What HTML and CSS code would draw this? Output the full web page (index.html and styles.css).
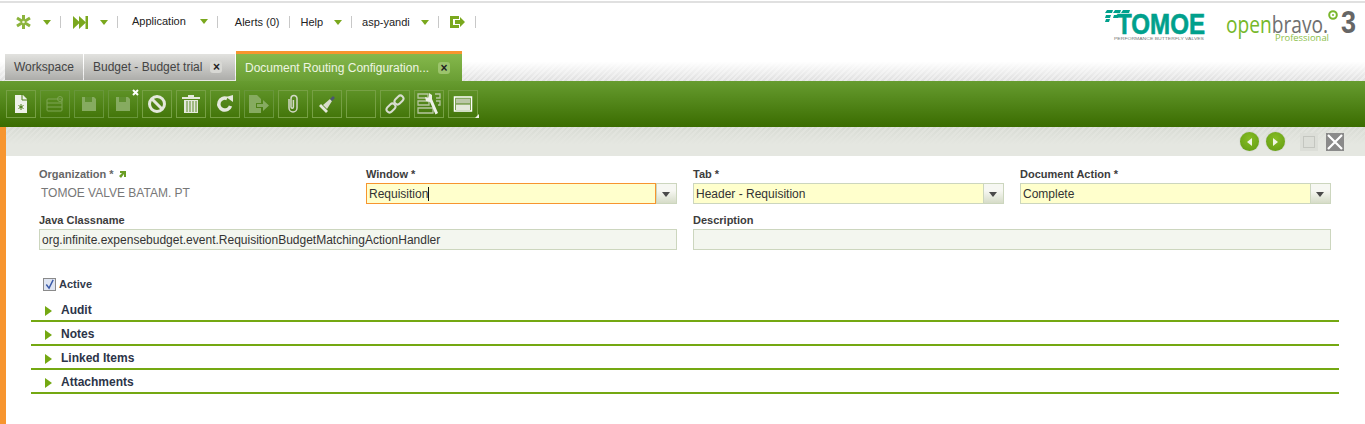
FILE: index.html
```html
<!DOCTYPE html>
<html lang="en">
<head>
<meta charset="utf-8">
<title>Document Routing Configuration</title>
<link rel="stylesheet" href="styles.css">
</head>
<body>
<header class="nav">
  <div class="nav-items">
    <svg class="ico star" viewBox="0 0 15 14"><g stroke="#8cb43c" stroke-width="3"><path d="M7.5 0v14M1 3l13 8M14 3L1 11"/></g><circle cx="7.5" cy="7" r="1.300" fill="#eef3dc"/></svg>
    <i class="caret c1"></i><i class="sep s1"></i>
    <svg class="ico ff" viewBox="0 0 15 13"><path d="M0 0l7 6.5L0 13zM6 0l7 6.5L6 13z" fill="#7aa81e"/><rect x="12.5" width="2.5" height="13" fill="#7aa81e"/></svg>
    <i class="caret c1"></i><i class="sep s1"></i>
    <span class="nav-text app">Application</span>
    <i class="caret c2"></i><i class="sep s1"></i>
    <span class="nav-text alerts">Alerts (0)</span>
    <i class="sep s2"></i>
    <span class="nav-text help">Help</span>
    <i class="caret c3"></i><i class="sep s1"></i>
    <span class="nav-text user">asp-yandi</span>
    <i class="caret c3"></i><i class="sep s1"></i>
    <svg class="ico logout" viewBox="0 0 15 12"><path d="M9 0H0v12h9V9H3V3h6z" fill="#7aa81e"/><path d="M5 4h5V1l5 5-5 5V8H5z" fill="#7aa81e"/></svg>
    <i class="sep s3"></i>
  </div>
  <div class="logos">
    <svg class="logo-tomoe" viewBox="0 0 101 32">
      <g fill="#00a08c"><path d="M2 1h6l-1 3H0zM10 1h6l-1 3H8zM18 1h7l-1 3h-8zM1 6h5L5 9H0zM9 6h5l-1 3H8z"/><path d="M1 10h4l-1 3H0z"/></g>
      <text class="tomoe-word" x="12" y="25" textLength="88" lengthAdjust="spacingAndGlyphs">TOMOE</text>
      <text class="tomoe-tag" x="9" y="31" textLength="90" lengthAdjust="spacingAndGlyphs">PERFORMANCE BUTTERFLY VALVES</text>
    </svg>
    <svg class="logo-ob" viewBox="0 0 132 34">
      <text class="ob-word" y="24" x="0" textLength="102" lengthAdjust="spacingAndGlyphs"><tspan class="ob-open">open</tspan><tspan class="ob-bravo">bravo.</tspan></text>
      <text class="ob-pro" x="49" y="32" textLength="54" lengthAdjust="spacingAndGlyphs">Professional</text>
      <circle cx="107" cy="6" r="3.800" fill="none" stroke="#7ab62c" stroke-width="2"/>
      <circle cx="107" cy="6" r="1" fill="#7ab62c"/>
      <text class="ob-three" x="115" y="24" textLength="15" lengthAdjust="spacingAndGlyphs">3</text>
    </svg>
  </div>
</header>

<nav class="tabs">
  <div class="tab tab-first">Workspace</div>
  <div class="tab tab-budget">Budget - Budget trial<i class="tab-x">×</i></div>
  <div class="tab tab-active">Document Routing Configuration...<i class="tab-x">×</i></div>
</nav>

<div class="toolbar">
  <button class="tool"><svg viewBox="0 0 20 20"><path d="M4 1h8l4 4v14H4z" fill="#eef1e8"/><path d="M11 0v6h5" fill="none" stroke="#4d7d16"/><path d="M10 10v6M7.500 11.500l5 3M12.500 11.500l-5 3" stroke="#4d7d16"/></svg></button>
  <button class="tool off"><svg viewBox="0 0 20 20"><g fill="none" stroke="#7ea555"><rect x="2" y="5" width="15" height="12" rx="1"/><path d="M2 9h15M2 13h15"/><circle cx="15" cy="5" r="2.500"/></g></svg></button>
  <button class="tool off"><svg viewBox="0 0 20 20"><path d="M3 3h12l2 2v12H3z" fill="#86ab60"/><rect x="6" y="3" width="7" height="5" fill="#5f9030"/></svg></button>
  <button class="tool off"><svg viewBox="0 0 20 20"><path d="M3 3h12l2 2v12H3z" fill="#86ab60"/><rect x="6" y="3" width="7" height="5" fill="#5f9030"/></svg><svg class="badge-x" viewBox="0 0 7 7"><path d="M1 1l5 5M6 1L1 6" stroke="#fff" stroke-width="2"/></svg></button>
  <button class="tool"><svg viewBox="0 0 20 20"><circle cx="10" cy="10" r="7.500" fill="none" stroke="#e4e8dc" stroke-width="3"/><path d="M5 5l10 10" stroke="#e4e8dc" stroke-width="3"/></svg></button>
  <button class="tool"><svg viewBox="0 0 20 20"><path d="M1 3h18v2H1zM7 1h6v2H7z" fill="#e4e8dc"/><path d="M3 6h14v13H3z" fill="#e4e8dc"/><path d="M6 7v11M9 7v11M12 7v11M15 7v11" stroke="#5c8a28"/></svg></button>
  <button class="tool"><svg viewBox="0 0 20 20"><path d="M15.500 12A6 6 0 1 1 12 4.500" fill="none" stroke="#e4e8dc" stroke-width="3.500"/><path d="M11 3l7-2 0 7z" fill="#e4e8dc"/></svg></button>
  <button class="tool off"><svg viewBox="0 0 20 20"><path d="M0 1h8l4 4v4H7v5h5v5H0z" fill="#86ab60"/><path d="M8 10h6V6l6 5.500-6 5.500v-4H8z" fill="#86ab60"/></svg></button>
  <button class="tool"><svg viewBox="0 0 20 20"><path d="M6 5v9a4 4 0 0 0 8 0V4.500a3 3 0 0 0-6 0V13a1.200 1.200 0 0 0 2.400 0V6" fill="none" stroke="#d4dac8" stroke-width="1.500"/></svg></button>
  <button class="tool"><svg viewBox="0 0 20 20"><path d="M2 12l2-2 7 7-2 2z" fill="#e4e8dc"/><path d="M6 11l7-6 2 2-5 8z" fill="#d8dccc"/><path d="M13 5l3-3 2 2-3 3z" fill="#4a5670"/></svg></button>
  <button class="tool"></button>
  <button class="tool"><svg viewBox="0 0 20 20"><g fill="none" stroke="#d8ddd0" stroke-width="2"><rect x="1" y="11" width="10" height="6" rx="3" transform="rotate(-45 6 14)"/><rect x="9" y="3" width="10" height="6" rx="3" transform="rotate(-45 14 6)"/></g></svg></button>
  <button class="tool"><svg class="tool-wide" viewBox="0 0 24 24"><g fill="none" stroke="#b6c6a0" stroke-width="1.300"><path d="M1 2h10v4H1zM1 9h11v4H1zM1 16h15v5H1zM18 2h5v4h-4M19 9h4v4h-2"/></g><path d="M12 1l3 2v4l6 14-2.500 1.500L13 10l-4-1-1-4 3 1 1-2z" fill="#eef0e8"/></svg></button>
  <button class="tool"><svg viewBox="0 0 20 20"><rect x="1.500" y="3" width="17" height="14" fill="none" stroke="#fff" stroke-width="1.500"/><rect x="3" y="4.500" width="14" height="5" fill="#bcc8a8"/><rect x="3" y="10.500" width="14" height="5.500" fill="#e4e8da"/></svg><i class="corner"></i></button>
</div>

<main class="content">
  <div class="statusbar">
    <span class="round"><i class="tri-l"></i></span>
    <span class="round"><i class="tri-r"></i></span>
    <span class="square"><i></i></span>
    <span class="close"><svg viewBox="0 0 18 18"><path d="M2 2l14 14M16 2L2 16" stroke="#fff" stroke-width="2.200"/></svg></span>
  </div>

  <form class="form">
    <div class="field">
      <span class="label label-muted">Organization * <svg class="link-arrow" viewBox="0 0 7 8"><path d="M1 1h6v6H5V4L2 8 0 6l3-3H1z" fill="#6a9e24"/></svg></span>
      <span class="static">TOMOE VALVE BATAM. PT</span>
    </div>
    <div class="field">
      <span class="label">Window *</span>
      <div class="select"><div class="input required focus"><span>Requisition<i class="cursor"></i></span></div><i class="pick"></i></div>
    </div>
    <div class="field">
      <span class="label">Tab *</span>
      <div class="select"><div class="input required"><span>Header - Requisition</span></div><i class="pick"></i></div>
    </div>
    <div class="field">
      <span class="label">Document Action *</span>
      <div class="select"><div class="input required"><span>Complete</span></div><i class="pick"></i></div>
    </div>
    <div class="field wide">
      <span class="label">Java Classname</span>
      <div class="input readonly"><span>org.infinite.expensebudget.event.RequisitionBudgetMatchingActionHandler</span></div>
    </div>
    <div class="field wide">
      <span class="label">Description</span>
      <div class="input readonly"></div>
    </div>
  </form>

  <div class="active-row">
    <span class="check"><svg viewBox="0 0 12 12"><path d="M2.500 6l3 4L10 1" fill="none" stroke="#3a5aa8" stroke-width="1.600"/></svg></span>
    <span class="active-label">Active</span>
  </div>

  <section class="sections">
    <div class="section"><i class="sec-tri"></i>Audit</div>
    <div class="section"><i class="sec-tri"></i>Notes</div>
    <div class="section"><i class="sec-tri"></i>Linked Items</div>
    <div class="section"><i class="sec-tri"></i>Attachments</div>
  </section>
</main>
</body>
</html>
```
FILE: styles.css
```css
* { box-sizing: border-box; }
html, body { margin: 0; padding: 0; }
body {
  width: 1365px;
  height: 424px;
  overflow: hidden;
  background: #fff;
  font-family: "Liberation Sans", Arial, sans-serif;
  color: #333;
  font-size: 12px;
  display: flex;
  flex-direction: column;
}
i { display: block; font-style: normal; }

/* top navigation */
.nav {
  height: 51px;
  flex: none;
  border-top: 2px solid #e0e0e0;
  margin-top: 1px;
  display: flex;
  justify-content: space-between;
  align-items: flex-start;
  padding: 0 7px 0 16px;
}
.nav-items { display: flex; align-items: center; height: 38px; }
.ico { flex: none; display: block; }
.star { width: 15px; height: 14px; }
.ff { width: 15px; height: 13px; margin-left: 12px; }
.logout { width: 15px; height: 12px; margin-left: 11px; margin-top: -1px; }
.caret {
  width: 0; height: 0;
  border-left: 4.5px solid transparent;
  border-right: 4.5px solid transparent;
  border-top: 5px solid #7aa81e;
  flex: none;
}
.c1 { margin-left: 12px; }
.c2 { margin-left: 14px; margin-top: -1px; }
.c3 { margin-left: 11px; }
.sep { width: 1px; height: 12px; background: #c8c8c8; flex: none; }
.s1 { margin-left: 9px; }
.s2 { margin-left: 10px; }
.s3 { margin-left: 10px; }
.nav-text { font-size: 11px; color: #222; line-height: 14px; white-space: nowrap; }
.app { margin-left: 14px; margin-top: -2px; }
.alerts { margin-left: 17px; }
.help { margin-left: 10px; }
.user { margin-left: 10px; }

.logos { display: flex; align-items: flex-start; padding-top: 6px; }
.logo-tomoe { width: 101px; height: 32px; display: block; overflow: visible; }
.tomoe-word { font-family: "Liberation Sans", sans-serif; font-weight: 700; font-size: 29px; fill: #00a08c; stroke: #00a08c; stroke-width: .6px; }
.tomoe-tag { font-family: "Liberation Sans", sans-serif; font-size: 4px; fill: #777; }
.logo-ob { width: 132px; height: 34px; display: block; margin-left: 20px; overflow: visible; }
.ob-word { font-family: "Open Sans", sans-serif; font-size: 24px; font-weight: 400; }
.ob-open { fill: #76b82a; }
.ob-bravo { fill: #707070; }
.ob-pro { font-family: "Open Sans", sans-serif; font-size: 9px; fill: #8cc04a; }
.ob-three { font-family: "Liberation Sans", sans-serif; font-weight: 700; font-size: 32px; fill: #666; }

/* tabs */
.tabs {
  height: 30px;
  flex: none;
  margin-top: -1px;
  display: flex;
  align-items: flex-end;
  padding-left: 5px;
  gap: 1px;
  background:
    linear-gradient(#fff 35%, rgba(255,255,255,.1) 100%),
    repeating-linear-gradient(135deg, #dcdcdc 0 2px, #e8e8e8 2px 4px);
}
.tab {
  height: 27px;
  display: flex;
  align-items: center;
  color: #444;
  font-size: 12px;
  white-space: nowrap;
  background: linear-gradient(#e2e2df, #adadaa);
  border-bottom: 1px solid #e8e8e4;
  padding-left: 9px;
}
.tab-first { width: 78px; }
.tab-budget { width: 151px; }
.tab-active {
  width: 226px;
  height: 30px;
  color: #eef5e2;
  background: linear-gradient(#85b84c, #6a9e34);
  border-top: 3px solid #f7952f;
  border-bottom: 0;
}
.tab-x {
  width: 12px; height: 12px;
  margin-left: 8px;
  border-radius: 3px;
  background: #d8d8d4;
  color: #222;
  font-size: 12px;
  line-height: 12px;
  font-weight: 700;
  text-align: center;
}
.tab-active .tab-x { background: #9cc46c; margin-left: 9px; }

/* toolbar */
.toolbar {
  height: 46px;
  flex: none;
  display: flex;
  gap: 4px;
  align-items: flex-start;
  padding: 9px 0 0 6px;
  background: linear-gradient(#679c30, #3a6c00);
}
.tool {
  position: relative;
  width: 30px;
  height: 28px;
  padding: 0;
  background: transparent;
  border: 1px solid #76a044;
  display: flex;
  align-items: center;
  justify-content: center;
}
.tool svg { width: 20px; height: 20px; display: block; }
.tool .tool-wide { width: 24px; height: 24px; }
.tool.off { border-color: #68963a; }
.tool .badge-x { position: absolute; right: -2px; top: -2px; width: 7px; height: 7px; }
.corner {
  position: absolute;
  right: 0; bottom: 0;
  width: 0; height: 0;
  border-left: 4px solid transparent;
  border-bottom: 4px solid #eef0e8;
  margin: 0 -2px -1px 0;
}

/* content */
.content {
  flex: 1;
  border-left: 6px solid #f7952f;
  min-height: 0;
}
.statusbar {
  height: 29px;
  display: flex;
  align-items: center;
  justify-content: flex-end;
  padding: 0 21px 0 0;
  background:
    linear-gradient(rgba(229,231,225,0) 0, #e5e7e1 60%),
    repeating-linear-gradient(135deg, #d8dbd4 0 2px, #e0e2dc 2px 4px);
}
.round {
  width: 19px; height: 19px;
  border-radius: 50%;
  background: radial-gradient(circle at 50% 35%, #86bd24, #619a12);
  box-shadow: 0 0 1px #8a9a80;
  margin-right: 7px;
  display: flex;
  align-items: center;
  justify-content: center;
}
.tri-l { width: 0; height: 0; border-top: 4px solid transparent; border-bottom: 4px solid transparent; border-right: 5px solid #f0f5e4; }
.tri-r { width: 0; height: 0; border-top: 4px solid transparent; border-bottom: 4px solid transparent; border-left: 5px solid #f0f5e4; }
.square {
  width: 18px; height: 18px;
  background: #dcded8;
  margin-left: 8px;
  margin-right: 8px;
  display: flex;
  align-items: center;
  justify-content: center;
}
.square i { width: 12px; height: 12px; border: 1px solid #c4c6c0; }
.close { width: 18px; height: 18px; background: #8a8a8a; display: block; }
.close svg { width: 18px; height: 18px; display: block; }

/* form */
.form {
  display: grid;
  grid-template-columns: repeat(4, 311px);
  column-gap: 16px;
  row-gap: 9px;
  padding: 11px 0 0 33px;
}
.field { display: flex; flex-direction: column; min-width: 0; height: 37px; }
.wide { grid-column: span 2; }
.label { font-size: 11px; font-weight: 700; color: #3c3c3c; line-height: 14px; height: 16px; }
.label-muted { color: #666; }
.link-arrow { width: 7px; height: 8px; display: inline-block; margin-left: 2px; }
.static { font-size: 12px; color: #777; line-height: 21px; padding: 1px 0 0 2px; }
.select { display: flex; }
.select .input { flex: 1; min-width: 0; border-right: 0; }
.input {
  height: 21px;
  border: 1px solid #ccd6be;
  display: flex;
  align-items: center;
  padding-left: 2px;
  font-size: 12px;
  color: #333;
  white-space: nowrap;
}
.input > span { flex: 1; display: flex; align-items: center; }
.required { background: #ffffcc; }
.readonly { background: #f3f6ef; }
.select .focus { border: 1px solid #f7952f; }
.cursor { width: 1px; height: 14px; background: #111; }
.pick {
  width: 21px;
  height: 21px;
  flex: none;
  border: 1px solid #ccd6be;
  background: linear-gradient(#f6f7f2 35%, #d6dcc8);
  position: relative;
}
.pick::after {
  content: "";
  position: absolute;
  left: 5px; top: 8px;
  border-left: 4.500px solid transparent;
  border-right: 4.500px solid transparent;
  border-top: 5px solid #4a4a4a;
}

/* active checkbox */
.active-row {
  display: flex;
  align-items: center;
  gap: 3px;
  padding: 0 0 0 37px;
  margin-top: 27px;
  height: 14px;
}
.check {
  width: 13px; height: 13px;
  border: 1px solid #8a8a8a;
  background: #dfe5f2;
  display: block;
}
.check svg { display: block; width: 11px; height: 11px; }
.active-label { font-size: 11px; font-weight: 700; color: #333a4a; }

/* sections */
.sections { margin: 7px 26px 0 25px; }
.section {
  height: 24px;
  border-bottom: 2px solid #74a812;
  display: flex;
  align-items: center;
  font-size: 12px;
  font-weight: 700;
  color: #2c3448;
  padding: 2px 0 0 14px;
}
.sec-tri {
  width: 0; height: 0;
  border-top: 5.500px solid transparent;
  border-bottom: 5.500px solid transparent;
  border-left: 7px solid #74a812;
  margin-right: 9px;
  margin-top: 2px;
}
```
